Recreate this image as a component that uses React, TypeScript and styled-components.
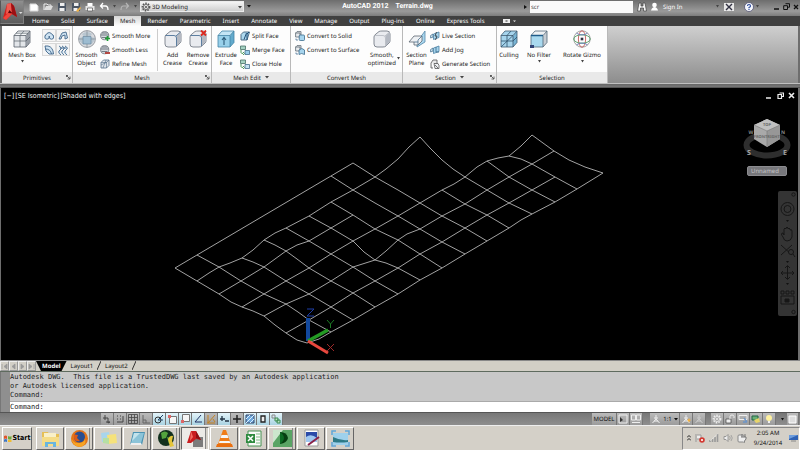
import React, { ReactNode } from "react";
import styled, { createGlobalStyle, css } from "styled-components";

const GlobalStyle = createGlobalStyle`
  *, *::before, *::after { box-sizing: border-box; }
  html, body { margin: 0; padding: 0; }
  body { background: #000; }
  button, input, select { font: inherit; color: inherit; margin: 0; padding: 0; border: 0; background: none; border-radius: 0; text-rendering: inherit; }
  svg { display: block; flex: none; }
`;

const ui = `"Noto Sans", "DejaVu Sans Condensed", sans-serif`;

/* ---------- shell ---------- */

const Shell = styled.div`
  display: flex;
  flex-direction: column;
  min-height: 100vh;
  font: 6px/8px ${ui};
  text-rendering: geometricPrecision;
  color: #222;
  background: #6e6e6e;
`;

const Row = styled.div`
  display: flex;
  align-items: center;
`;

const IconButton = styled.button<{ $w?: number }>`
  display: flex;
  align-items: center;
  justify-content: center;
  width: ${(p) => p.$w ?? 14}px;
  flex: none;
`;

/* ---------- header ---------- */

const Header = styled.header`
  display: grid;
  grid-template-columns: 24px 1fr;
  background: #404040;
`;

const AppButton = styled.button`
  grid-row: span 2;
  display: flex;
  align-items: center;
  align-self: start;
  height: 24px;
  padding-left: 2px;
  background: linear-gradient(#8f8f8f, #5b5b5b);
  border: 1px solid #7f7f7f;
  border-left-color: #555;
`;

const TitleBar = styled.div`
  display: flex;
  align-items: center;
  height: 16px;
  padding-bottom: 3px;
  background: linear-gradient(#6d6d6d, #9a9a9a 70%, #7c7c7c);
`;

const Workspace = styled.div`
  display: grid;
  align-items: center;
  width: 104px;
  height: 11px;
  margin-left: 1px;
  background: linear-gradient(#f4f4f4, #cfcfcf);
  border: 1px solid #ececec;
  & > * { grid-area: 1 / 1; }
  & > svg:last-child { justify-self: end; margin-right: 1px; }
  select {
    appearance: none;
    width: 100%;
    padding-left: 11px;
    color: #222;
    outline: none;
  }
`;

const Title = styled.h1`
  flex: 1;
  margin: 0;
  color: #fff;
  font: bold 7px/9px Roboto, sans-serif;
  text-align: center;
  white-space: pre;
`;

const Search = styled.input`
  width: 103px;
  height: 12px;
  padding-left: 1px;
  background: #fafafa;
  color: #444;
`;

const SignIn = styled.button`
  display: flex;
  align-items: center;
  gap: 4px;
  width: 66px;
  color: #fff;
`;

const TabBar = styled.nav`
  display: flex;
  height: 10px;
  padding-left: 2px;
`;

const Tab = styled.button<{ $active?: boolean }>`
  padding: 0 6px;
  color: #fff;
  line-height: 10px;
  white-space: nowrap;
  ${(p) =>
    p.$active &&
    css`
      color: #222;
      background: linear-gradient(#d6d6d6, #fdfdfd);
    `}
`;

/* ---------- ribbon ---------- */

const Ribbon = styled.section`
  display: flex;
  height: 57px;
  margin: 0 2px;
  background: linear-gradient(#cfcfcf, #8d8d8d);
`;

const Panel = styled.section<{ $w: number }>`
  display: flex;
  flex-direction: column;
  flex: 0 0 ${(p) => p.$w}px;
  background: #fdfdfd;
  border-right: 1px solid #b9b9b9;
`;

const PanelBody = styled.div<{ $pad?: number }>`
  display: flex;
  flex: 1;
  align-items: flex-start;
  padding: 3px 0 0 ${(p) => p.$pad ?? 0}px;
`;

const PanelFoot = styled.footer`
  display: grid;
  grid-template-columns: 8px 1fr 8px;
  align-items: center;
  justify-items: center;
  height: 11px;
  line-height: 10px;
  background: #e9e9e9;
  color: #222;
  span { display: flex; align-items: center; gap: 4px; grid-column: 2; }
`;

const Large = styled.button<{ $w: number }>`
  display: flex;
  flex-direction: column;
  align-items: center;
  flex: none;
  width: ${(p) => p.$w}px;
  padding-top: 1px;
  color: #222;
  line-height: 8px;
  white-space: pre;
  span { padding: 3px 0 1px; }
`;

const SmallList = styled.div`
  display: flex;
  flex-direction: column;
  flex: none;
`;

const Small = styled.button`
  display: flex;
  align-items: center;
  gap: 2px;
  height: 14px;
  color: #222;
  white-space: nowrap;
`;

const Divider = styled.div`
  width: 1px;
  height: 42px;
  margin: 0 2px 0 auto;
  background: #ccc;
`;

const PrimitiveGrid = styled.div`
  display: grid;
  grid-template-columns: 14px 14px;
  grid-auto-rows: 13px;
  gap: 1px 0;
  button { display: grid; place-items: center; border: 1px solid #d8d8d8; background: #f5f5f5; }
`;

const OptionArrow = styled.button`
  align-self: center;
  margin-top: 20px;
`;

const RibbonEdge = styled.div`
  height: 5px;
  background: linear-gradient(#c0c0c0 0 20%, #666 20%, #787878 80%, #333);
`;

/* ---------- viewport ---------- */

const Viewport = styled.main`
  display: grid;
  grid-template: 1fr / minmax(0, 1fr);
  height: 272px;
  margin: 0 2px 0 1px;
  background: #000;
  & > * { grid-area: 1 / 1; }
`;

const ViewLabels = styled.div`
  display: flex;
  gap: 1px;
  align-self: start;
  padding: 4px 0 0 3px;
  color: #f0f0f0;
  font: 7px/8px "DejaVu Sans Condensed", sans-serif;
  button { white-space: nowrap; }
`;

const ViewTools = styled.div`
  display: flex;
  flex-direction: column;
  align-items: flex-end;
  justify-self: end;
  align-self: start;
  padding: 4px 1px 0 0;
`;

const ViewCube = styled.div`
  display: flex;
  flex-direction: column;
  align-items: center;
  gap: 6px;
  margin: 19px 5px 0 0;
`;

const UcsName = styled.button`
  width: 40px;
  height: 10px;
  padding-left: 3px;
  text-align: left;
  border: 1px solid #8b8b8f;
  border-radius: 2px;
  background: #77777b;
  color: #c4c4c8;
  line-height: 8px;
`;

const NavBar = styled.nav`
  margin-top: 15px;
  width: 19px;
  height: 125px;
  border-radius: 2px;
  background: #343434;
`;

const Drawing = styled.svg`
  width: 100%;
  height: 272px;
`;

/* ---------- bottom ---------- */

const LayoutBar = styled.nav`
  display: flex;
  height: 12px;
  align-items: stretch;
  border-top: 1px solid #888;
  border-bottom: 1px solid #5f6b5f;
  background: #d2cfc6;
  color: #111;
`;

const LayoutTab = styled.button<{ $active?: boolean }>`
  padding: 0 4px;
  line-height: 9px;
  ${(p) =>
    p.$active &&
    css`
      padding: 0 6px;
      background: #000;
      color: #fff;
      font-weight: bold;
      clip-path: polygon(0 0, 100% 0, calc(100% - 5px) 100%, 5px 100%);
    `}
`;

const Arrows = styled.div`
  display: flex;
  button { width: 9px; display: grid; place-items: center; border: 1px solid; border-color: #eee #999 #999 #eee; }
`;

const Command = styled.section`
  display: grid;
  grid-template-columns: 9px 1fr;
  height: 40px;
  border-left: 1px solid #777;
  background: #8f8f8f;
  color: #222;
  font: 7px/9px "DejaVu Sans Mono", monospace;
`;

const History = styled.pre`
  margin: 0;
  height: 30px;
  padding-top: 1px;
  border-bottom: 1px solid #aaa;
  background: #c8c8c8;
  font: inherit;
`;

const CommandLine = styled.label`
  display: flex;
  align-items: center;
  height: 10px;
  background: #fff;
  input { flex: 1; outline: none; }
`;

const StatusBar = styled.div`
  display: flex;
  align-items: center;
  justify-content: space-between;
  height: 13px;
  padding: 0 1px 0 101px;
  background: linear-gradient(#777, #8e8e8e);
  border-top: 1px solid #555;
`;

const StatusButton = styled.button<{ $on?: boolean; $w?: number }>`
  display: grid;
  grid-auto-flow: column;
  place-items: center;
  width: ${(p) => p.$w ?? 13}px;
  height: 12px;
  color: #111;
  border-right: 1px solid #777;
  background: ${(p) => (p.$on ? "linear-gradient(#e4f4fa, #a9d3e2)" : "linear-gradient(#bbb, #9b9b9b)")};
`;

const Spacer = styled.div<{ $w: number }>`
  width: ${(p) => p.$w}px;
`;

const Taskbar = styled.footer`
  display: flex;
  align-items: center;
  gap: 1px;
  flex: 1;
  min-height: 25px;
  padding-left: 2px;
  border-top: 1px solid #eee;
  background: #d4d0c8;
`;

const TaskButton = styled.button<{ $active?: boolean; $stack?: boolean; $w?: number }>`
  display: flex;
  align-items: center;
  justify-content: center;
  width: ${(p) => p.$w ?? 28}px;
  height: 23px;
  border: 1px solid;
  border-color: ${(p) => (p.$active ? "#666 #fff #fff #666" : "#fff #666 #666 #fff")};
  background: ${(p) => (p.$active ? "#eceae6" : "#d4d0c8")};
  ${(p) => p.$stack && css`box-shadow: inset -2px 0 #d4d0c8, inset -3px 0 #888;`}
  font: bold 7px/9px "DejaVu Sans Condensed", sans-serif;
  color: #000;
  gap: 1px;
`;

const Tray = styled.div`
  display: flex;
  align-items: center;
  gap: 4px;
  height: 23px;
  margin-left: auto;
  padding: 0 1px 0 4px;
  border: 1px solid;
  border-color: #888 #fff #fff #888;
  color: #111;
`;

const Clock = styled.time`
  width: 34px;
  text-align: center;
  line-height: 10px;
  white-space: nowrap;
`;

/* ---------- icons ---------- */

const Svg = ({ w, h = w, children }: { w: number; h?: number; children: ReactNode }) => (
  <svg width={w} height={h} viewBox={`0 0 ${w} ${h}`} fill="none" aria-hidden="true">
    {children}
  </svg>
);

const Caret = ({ c = "#444", w = 4 }: { c?: string; w?: number }) => (
  <Svg w={w} h={3}><path d={`M0 0h${w}L${w / 2} 2.5z`} fill={c} /></Svg>
);

const Launcher = () => (
  <Svg w={5}><path d="M0 .5h2M.5 0v2M1 1l3 3M4 1.5V4H1.5" stroke="#555" strokeWidth=".9" /></Svg>
);

type CubeProps = { top?: string; left?: string; right?: string; line?: string; children?: ReactNode };

const Cube = ({ top = "#f4f6f8", left = "#e2e5e9", right = "#b8bdc5", line = "#59616b", children }: CubeProps) => (
  <Svg w={18}>
    <path d="M1 5.5 5 1h12l-4 4.5z" fill={top} />
    <path d="M1 5.5h12V17H1z" fill={left} />
    <path d="M13 5.5 17 1v11.5L13 17z" fill={right} />
    <path d="M1 5.5 5 1h12v11.5L13 17H1zM1 5.5h12V17M13 5.5 17 1" stroke={line} strokeWidth=".8" />
    {children}
  </Svg>
);

const RoundCube = ({ cut, edge = "#4d7397" }: { cut?: boolean; edge?: string }) => (
  <Svg w={18}>
    <path d="M1 7Q1 5 3 4L6 1.500Q7 1 9 1h5q3 0 3 3v7q0 1-1 2l-3 3q-1 1-3 1H4q-3 0-3-3z" fill="#e9ebef" stroke="#777e88" strokeWidth=".9" />
    <path d="M12.500 6 16.500 2q.5 1 .5 2v7l-4 5z" fill="#b4b9c2" />
    <path d="M1.500 5.500H10q2.500 0 2.500 2.500v8M12 6l4.500-4" stroke={edge} strokeWidth=".9" />
    {cut && <path d="M12 .5l5 5M17 .5l-5 5" stroke="#dd2a20" strokeWidth="1.800" />}
  </Svg>
);

const SmoothObject = () => (
  <Svg w={18}>
    <circle cx="9" cy="9" r="8.400" fill="#d8dade" stroke="#848991" strokeWidth=".8" />
    <path d="M4 4q5-4 10 0l-2 2.500H6zM1 8l4-1v7q-4-2-4-6zM13 7l4 1q-1 5-4 6z" fill="#b9c6d0" />
    <path d="M5 6.500h8V14H5z" fill="#9dbcd1" stroke="#6b8aa1" strokeWidth=".7" />
    <path d="M9 .8v5.700M1 9h4M13 9h4M9 14v3.500" stroke="#7f8a94" strokeWidth=".7" />
  </Svg>
);

const SmoothMini = ({ mark }: { mark: "plus" | "minus" | "refine" }) => (
  <Svg w={10}>
    {mark === "refine" ? (
      <>
        <path d="M1 3.500 3.500 1H9v5.500L6.500 9H1z" fill="#dfe4ea" stroke="#56708a" strokeWidth=".8" />
        <path d="M1 3.500h5.500V9M6.500 3.500 9 1M3 9l3-8M1 6l6-3" stroke="#56708a" strokeWidth=".6" />
      </>
    ) : (
      <>
        <circle cx="4.700" cy="4.700" r="4.100" fill="#d5d9de" stroke="#70757c" strokeWidth=".8" />
        <path d="M.7 4h8M2 2h5.500M1.500 6.500h6" stroke="#5c6670" strokeWidth=".8" />
        {mark === "plus"
          ? <path d="M7.500 5v5M5 7.500h5" stroke="#219c36" strokeWidth="1.700" />
          : <path d="M5 8h5" stroke="#b33a34" strokeWidth="1.800" />}
      </>
    )}
  </Svg>
);

const EditMini = ({ kind }: { kind: "split" | "merge" | "hole" }) => (
  <Svg w={10}>
    {kind === "split" ? (
      <>
        <path d="M1 3.500 3.500 1H9.500L7 9H1z" fill="#aed9ef" stroke="#41617b" strokeWidth=".9" />
        <path d="M4 8.500 6.500 2M7 9V3L9 1" stroke="#1f4d77" strokeWidth="1" />
      </>
    ) : (
      <>
        <path d="M.5 1h5v3.500h-5z" fill="#a5d2c2" stroke="#477066" strokeWidth=".8" />
        <path d="M1 5v2.500q0 1 2 1M3 7l1.500 1.500L3 10" stroke="#3c8e4c" strokeWidth=".9" />
        <path d="M5 5.500h4.500V9.500H5z" fill={kind === "merge" ? "#98cce8" : "#c5e2f2"} stroke="#446e8b" strokeWidth=".8" />
      </>
    )}
  </Svg>
);

const ConvertMini = ({ round }: { round?: boolean }) => (
  <Svg w={10}>
    <path d="M.6 2 2 .6h4V6H.6zM.6 2H5v4" fill="#e8ebee" stroke="#606a74" strokeWidth=".8" />
    <path d="M1 7.500v1.500h2" stroke="#4d7397" strokeWidth=".8" />
    {round ? <path d="M4 5q3-3 5.500 0v4.500q-3-2-5.500 0z" fill="#a7d5ee" stroke="#3b6b8c" strokeWidth=".8" />
      : <rect x="4.200" y="4" width="5.300" height="5.500" rx="1" fill="#a7d5ee" stroke="#3b6b8c" strokeWidth=".8" />}
  </Svg>
);

const SectionPlane = () => (
  <Svg w={18}>
    <path d="M9 12 17 1v11l-8 5z" fill="#a9d6ee" stroke="#5688a8" strokeWidth=".8" />
    <path d="M1 12 6 6h8v5l-4 4H6v-3z" fill="#eef1f4" stroke="#5c646e" strokeWidth=".8" />
    <path d="M10 15v-5l4-4M6 12h4" stroke="#4a6f8a" strokeWidth=".8" />
  </Svg>
);

const SectionMini = ({ kind }: { kind: "live" | "jog" | "gen" }) => (
  <Svg w={10}>
    {kind === "gen" ? (
      <>
        <path d="M1 4 3 1h4v4M1 4v5h2" fill="#e8e8e8" stroke="#555" strokeWidth=".8" />
        <path d="M4 4.500h4l1 2v3H5zM5 6l3 3" fill="#eef1f3" stroke="#555" strokeWidth=".8" />
      </>
    ) : (
      <>
        <path d="M.6 7V4.500L3 3v3z" fill="#d3e8f4" stroke="#4b7391" strokeWidth=".8" />
        <path d="M3.500 8.500V3l5.500-2v5.500z" fill="#a7d4ec" stroke="#4c81a4" strokeWidth=".8" />
        {kind === "live" ? <path d="M6.500 1 5 5h2L5.500 9" stroke="#39424b" strokeWidth=".9" /> : <path d="M6 2v5h3" stroke="#39698c" strokeWidth=".8" />}
      </>
    )}
  </Svg>
);

const Gizmo = () => (
  <Svg w={18}>
    <circle cx="9" cy="9" r="8.200" stroke="#8c8c8c" strokeWidth=".8" />
    <ellipse cx="9" cy="9" rx="3.600" ry="8.200" stroke="#c35a5a" strokeWidth=".9" />
    <ellipse cx="9" cy="9" rx="8.200" ry="4.200" stroke="#4f9b63" strokeWidth=".9" />
    <path d="M3.500 3.200q5.500 3.500 11 0M3.500 14.800q5.500-3.500 11 0" stroke="#5a70b8" strokeWidth=".8" />
    <rect x="7.700" y="7.700" width="2.600" height="2.600" fill="#334" />
  </Svg>
);

const primitivePaths = [
  <><circle cx="3" cy="6" r="2.200" /><circle cx="7.500" cy="6" r="2.200" /><path d="M1 5q4-7 8.500 0" /></>,
  <path d="M1 8 4 2l4-1 1.500 6-2.500 1V4L4 5 3 8z" />,
  <path d="M1 1h3q5 1 5.500 8H5Q1 7 1 1zM1.500 4q5 0 6 5" />,
  <path d="M1 1q4 2 1 4t1 5M4 1q4 2 1 4t1 5M7 1q4 2 1 4t1 5M2 3h6" />,
];

const PrimitiveIcon = ({ i }: { i: number }) => (
  <Svg w={10}><g fill="#cfe3f2" stroke="#3f658a" strokeWidth=".9">{primitivePaths[i]}</g></Svg>
);

const AutoLogo = () => (
  <Svg w={20} h={20}>
    <path d="M0 16 4 2l4-1 3 3 3 11-5-3-6 6z" fill="#d0201e" />
    <path d="m4 2 4-1 1 9-6 2z" fill="#ef5a50" />
    <path d="m8 1 3 3 3 11-5-3z" fill="#9d1013" />
    <path d="m0 16 3 2 6-6-4-1z" fill="#f0453c" />
    <path d="m5 11 1.500-3L9 11z" fill="#5a0608" />
    <path d="M16 10h3.500l-1.700 2z" fill="#ddd" />
  </Svg>
);

const quickIcons: [string, ReactNode][] = [
  ["New", <path d="M1 2h6l2 2v5H1z" fill="#fff" stroke="#d8d8d8" />],
  ["Open", <><path d="M1 8V2h3l1 1h3v2" stroke="#eee" /><path d="m1 8 2-4h7L8 8z" fill="#ddd" /></>],
  ["Save", <><path d="M1 1h8v8H1z" fill="#4b5563" /><path d="M3 1h4.500v3H3zM2.500 6h5v3h-5z" fill="#eee" /></>],
  ["Save As", <><path d="M1 1h8v8H1z" fill="#4b5563" /><path d="M3 1h4.500v3H3zM2.500 6h4v3h-4z" fill="#eee" /><path d="m5 9 4-4 1 1-3 4z" fill="#f1b346" /></>],
  ["Plot", <><path d="M2.500 1h5v3h-5z" fill="#fff" /><path d="M.5 4h9v4h-9z" fill="#e5e5e5" /><path d="M2.500 6h5v3h-5z" fill="#fff" stroke="#555" strokeWidth=".7" /></>],
  ["Undo", <path d="M4 1 1.500 4 4 6.500M2 4h4.500Q9 4 9 8" stroke="#fff" strokeWidth="1.300" />],
  ["Redo", <path d="M6 1 8.500 4 6 6.500M8 4H3.500Q1 4 1 8" stroke="#b5b5b5" strokeWidth="1.200" />],
];

const Gear = ({ c = "#555" }: { c?: string }) => (
  <Svg w={10}>
    <circle cx="5" cy="5" r="3.700" stroke={c} strokeWidth="1.400" strokeDasharray="1.600 1.100" />
    <circle cx="5" cy="5" r="2.600" stroke={c} strokeWidth=".8" /><circle cx="5" cy="5" r="1" fill={c} />
  </Svg>
);

/* ---------- terrain ---------- */

type P = [number, number];
const rows: P[][] = [
  [[175, 268], [197, 255], [353, 163]],
  [[197, 281], [209, 273], [219, 267], [230, 263], [242, 258], [253, 250], [264, 240], [275, 233], [286, 228], [309, 216], [331, 202], [353, 190], [375, 177], [386, 169], [398, 159], [409, 147], [420, 137]],
  [[219, 294], [241, 281], [264, 267], [286, 251], [297, 245], [309, 241], [331, 228], [353, 215]],
  [[242, 307], [264, 294], [286, 281], [309, 268], [331, 254], [353, 241], [375, 229], [398, 216], [420, 203], [442, 190], [454, 184], [465, 177], [477, 167], [487, 161], [498, 158], [509, 156], [521, 146], [532, 135]],
  [[264, 316], [286, 304], [309, 294], [331, 281], [353, 267], [375, 260], [386, 251], [398, 240], [407, 234], [420, 229], [442, 216], [465, 204], [487, 190], [509, 177], [532, 164], [554, 151]],
  [[286, 333], [309, 320], [331, 307], [353, 293], [375, 281], [398, 268], [420, 254], [442, 242], [465, 228], [487, 215], [509, 203], [532, 190], [555, 177]],
  [[307, 343], [319, 339], [331, 332], [353, 320], [375, 307], [398, 294], [420, 280], [442, 268], [465, 254], [487, 241], [509, 228], [521, 220], [532, 214], [555, 202], [577, 189], [603, 173]],
];
const columns: P[][] = [
  [[175, 268], [197, 281], [219, 294], [231, 302], [242, 307], [253, 311], [264, 316], [275, 325], [286, 333], [297, 340], [307, 343]],
  [[197, 255], [219, 267], [241, 281], [264, 294], [286, 304], [298, 312], [309, 320], [331, 332]],
  [[242, 258], [253, 262], [264, 267], [286, 281], [309, 294], [331, 307], [353, 320]],
  [[264, 240], [275, 245], [286, 251], [297, 259], [309, 268], [331, 281], [353, 293], [375, 307]],
  [[286, 228], [309, 241], [331, 254], [353, 267], [375, 281], [398, 294]],
  [[309, 216], [331, 228], [353, 241], [364, 252], [375, 260], [386, 263], [398, 268], [409, 274], [420, 280]],
  [[331, 202], [353, 215], [375, 229], [398, 240], [420, 254], [442, 268]],
  [[331, 176], [353, 190], [375, 203], [398, 216], [420, 229], [442, 242], [465, 254]],
  [[353, 163], [375, 177], [398, 190], [420, 203], [442, 216], [465, 228], [487, 241]],
  [[442, 190], [465, 204], [487, 215], [509, 228]],
  [[420, 137], [430, 148], [442, 160], [453, 169], [465, 177], [487, 190], [509, 203], [532, 214]],
  [[487, 161], [509, 177], [532, 190], [555, 202]],
  [[509, 156], [521, 159], [532, 164], [555, 177], [577, 189]],
  [[532, 135], [554, 151], [569, 160], [585, 167], [603, 173]],
];

const Terrain = () => (
  <Drawing viewBox="1 88 797 272" preserveAspectRatio="xMinYMin meet" fill="none" role="img" aria-label="Terrain mesh">
    <g stroke="#b4b4b4" strokeWidth=".9">
      {[...rows, ...columns].map((line, i) => (
        <polyline key={i} points={line.map((p) => p.join(",")).join(" ")} />
      ))}
    </g>
    <path d="M308 341V318" stroke="#12489c" strokeWidth="4" />
    <path d="m308 341 20-11" stroke="#249a24" strokeWidth="3.500" />
    <path d="m308 341 20 12" stroke="#e8483e" strokeWidth="3" />
    <path d="M307 309h7l-7 7h7" stroke="#1f3fa8" />
    <path d="m327 320 3.500 4 3.500-4M330.500 324v4" stroke="#1c7a25" />
    <path d="m327 344 7 7M334 344l-7 7" stroke="#9c2a2a" />
  </Drawing>
);

const CubeDial = () => (
  <svg width="50" height="42" viewBox="0 0 50 42" fill="none">
    <ellipse cx="25" cy="27" rx="20.500" ry="10.500" stroke="#2e2e2e" strokeWidth="6" />
    <path d="m12 7 13-6 13 6v14l-13 8-13-8z" fill="#a9a9a9" />
    <path d="m12 7 13-6 13 6-13 6z" fill="#c0c0c0" />
    <path d="M25 13v16l13-8V7z" fill="#979797" />
    <path d="m12 7 13 6 13-6M25 13v16" stroke="#777" strokeWidth=".6" />
    <g fill="#666" fontFamily={ui} fontSize="4" fontWeight="bold" textAnchor="middle">
      <text x="25" y="8">TOP</text>
      <text x="18.500" y="20">FRONT</text>
      <text x="31.500" y="20">RIGHT</text>
    </g>
    <g fill="#a4a4a4" fontFamily={ui} fontSize="7" fontWeight="bold" textAnchor="middle">
      <text x="7" y="37">S</text><text x="43" y="37">E</text>
    </g>
    <g fill="#888" fontFamily={ui} fontSize="5" fontWeight="bold" textAnchor="middle">
      <text x="9" y="16">W</text><text x="41" y="16">N</text>
    </g>
  </svg>
);

const NavIcons = () => (
  <Svg w={19} h={125}>
    <g stroke="#161616" strokeWidth="1">
      <circle cx="15.500" cy="3.500" r="1.700" />
      <circle cx="9.500" cy="18" r="6.500" /><circle cx="9.500" cy="18" r="3.500" />
      <path d="M5 46q-3-4 0-4l1 2v-6q1-2 2 0v-1q1-2 2 0v1q1-2 2 0v1q2-1 2 1v6q-1 4-5 4-3 0-4-4z" />
      <path d="m3 54 11 10M14 54 3 64" /><circle cx="13" cy="61" r="2.500" fill="#343434" /><path d="m15 63 2 3" />
      <path d="M9.500 75v13M3 82h13M7 77l2.500-2.500L12 77M7 86l2.500 2.500L12 86M5 80l-2 2 2 2M14 80l2 2-2 2" />
      <path d="M3 100h3v3H3zM8 100h3v3H8zM13 100h3v3h-3zM3 105h13v8H3z" /><path d="M7 108h4v3H7z" fill="#161616" />
      <circle cx="15.500" cy="121" r="1.700" />
    </g>
    <g fill="#111"><path d="M8 29h3l-1.500 2zM8 70h3l-1.500 2zM8 92h3l-1.500 2z" /></g>
  </Svg>
);

/* ---------- status and taskbar drawings ---------- */

const statusIcons: [string, boolean, ReactNode][] = [
  ["Infer constraints", false, <path d="M3 1v5M1 4h5M6 4v5l2-1M4 8h4" stroke="#444" />],
  ["Snap", false, <path d="M2 2h1M5 2h1M2 5h1M5 5h1M2 8h6V2" stroke="#444" />],
  ["Grid", false, <path d="M.5.5h9v9h-9zM3.500.5v9M6.500.5v9M.5 3.500h9M.5 6.500h9" stroke="#444" strokeWidth=".8" />],
  ["Ortho", false, <path d="M2 1v8h7M2 6h3v3" stroke="#666" />],
  ["Polar", true, <><circle cx="4" cy="6" r="3" stroke="#333" /><path d="m4 6 5-5M4 6h5" stroke="#246" /></>],
  ["Object snap", true, <><path d="M2.500 2.500h7v7h-7z" stroke="#777" fill="#f6f6f6" /><path d="M1 1h3v3H1z" fill="#d66" /></>],
  ["3D object snap", true, <><path d="M2.500.5h7v7h-7z" stroke="#777" fill="#f6f6f6" /><path d="M1 6h3v3H1z" fill="#d66" /></>],
  ["Tracking", true, <path d="M8 1 2 8h7" stroke="#236" />],
  ["Dynamic UCS", false, <path d="M2 9V1M1 9h8M2 9l7-8M7 5l2 3" stroke="#c58422" />],
  ["Dynamic input", true, <path d="M3 2v5M1 5h5M6 7h4" stroke="#234" strokeWidth="1.300" />],
  ["Lineweight", false, <path d="M5 1v8M1 5h8" stroke="#222" strokeWidth="1.500" />],
  ["Transparency", true, <><path d="M1 1h8v8H1z" fill="#6fa8dc" stroke="#346" /><path d="m1 5 4-4M1 9l8-8M5 9l4-4" stroke="#dcefff" /></>],
  ["Quick properties", true, <path d="M3 2h4v6H3z" stroke="#222" strokeWidth="1.300" fill="#eee" />],
  ["Selection cycling", true, <><path d="M1 1h3v3H1z" stroke="#888" /><path d="M4 4h3v3H4zM6 6h3v3H6z" fill="#bde3c3" stroke="#3a8b52" /></>],
];

const Compass = ({ star, c = "#eee" }: { star?: boolean; c?: string }) => (
  <Svg w={10}>
    <path d="M5 1v4L1.500 9M5 5l3.500 4M3 4h4M3 7h4" stroke={c} />
    {star && <path d="m8 4 .7 1.500L10 6 8.700 7 8 9 7.300 7 6 6l1.300-.5z" fill="#f6b13c" />}
  </Svg>
);

const taskItems: [string, boolean, boolean, ReactNode][] = [
  ["Explorer", false, false, <><path d="M1 3h6l1 2h10v12H1z" fill="#e6bf55" /><path d="M3 4h12v7H3z" fill="#f9f0c8" /><path d="M1 8h17v9H1z" fill="#f5dc86" /><path d="M4 18v-5h11v5h-3v-3H7v3z" fill="#69b5de" /></>],
  ["Firefox", false, true, <><circle cx="9.500" cy="9.500" r="8.500" fill="#e2741a" /><circle cx="9.500" cy="8" r="5.500" fill="#294d91" /><path d="M1 7q1 8 9 7 5-1 5-5 2 8-5 9-8 0-9-11z" fill="#f6a323" /><path d="M4 5q2 1 4 1l-1 3 3 3q-5 1-6-3z" fill="#db5a17" /></>],
  ["Sticky Notes", false, false, <><path d="m2 4 8-1 1 9-8 1z" fill="#a8d5ec" /><path d="m8 6 9-1 1 9-9 1z" fill="#f6e27a" /><path d="m4 9 6 0 0 6-6-1z" fill="#b7dfa3" /></>],
  ["Notepad", false, true, <><path d="M5 3h12l-3 13H2z" fill="#4b93b3" /><path d="M6 4h10l-3 10H3z" fill="#8cc4d8" /><path d="M6 4h6L4 12z" fill="#c3e3ec" /><path d="M3 14h10l1 2H2z" fill="#eee" /></>],
  ["Download manager", false, true, <><circle cx="9" cy="9" r="8" fill="#12301d" /><path d="M4 4q4-3 7 0l-2 5-4 1zM10 8l5 1-3 6z" fill="#53a43e" /><path d="M11 10q2-4 5-3l-1 5 2 5-4 1z" fill="#e4c53a" /></>],
  ["AutoCAD", true, true, <><path d="M7 8h10v10H7z" fill="#7c7c7c" /><path d="m1 14 4-12h5l5 9-5-1-5 4z" fill="#c91c1f" /><path d="m5 2 2 6-3 4z" fill="#f26a60" /><path d="m10 2 5 9-5-2z" fill="#8e0f13" /></>],
  ["VLC", false, false, <><path d="m8 1h3l5 14H3z" fill="#ef7d18" /><path d="M6.500 6h6l1 3h-8zM4.500 12h10l1 2H4z" fill="#f6f6f6" /><path d="M2 15h15l1 3H1z" fill="#e96f10" /></>],
  ["Excel", false, false, <><path d="M4 2h13v15H4z" fill="#fafafa" stroke="#469353" /><path d="M12 5h4M12 8h4M12 11h4M12 14h4" stroke="#7fbf85" /><path d="M2 5h9v9H2z" fill="#2f8b40" /><path d="m4 7 5 5M9 7l-5 5" stroke="#fff" strokeWidth="1.500" /></>],
  ["Media", false, true, <><path d="M0 1h19v17H0z" fill="#5aa465" /><path d="M0 1h10L0 14z" fill="#cce7cd" /><path d="M7 3q7 0 8 6-1 5-8 6z" fill="#063f12" /><path d="M7 3q4 3 4 6t-4 6z" fill="#0c6a24" /></>],
  ["Image editor", false, false, <><path d="M3 1h13v16H3z" fill="#fff" stroke="#999" /><path d="M4 3h11v8H4z" fill="#2b4aa8" /><path d="M4 8q5-4 11 1v4H4z" fill="#9fc7f0" /><path d="m6 16 11-8" stroke="#8a2348" strokeWidth="2" /></>],
  ["Photo viewer", false, false, <><path d="M2 4h15v12H2z" fill="#9ed1ec" /><path d="M2 8q8 4 15 3v2q-8 1-15 0z" fill="#2d7a87" /><path d="M1 6V2h4M14 2h4v4M1 13v4h4M14 17h4v-4" stroke="#5ea5d8" strokeWidth="1.500" /></>],
];

const tabs = ["Home", "Solid", "Surface", "Mesh", "Render", "Parametric", "Insert", "Annotate", "View", "Manage", "Output", "Plug-ins", "Online", "Express Tools"];

const layoutArrows: [string, string][] = [
  ["First layout", "M1 1v5M6 1 3 3.500 6 6z"],
  ["Previous layout", "M5 1 2 3.500 5 6z"],
  ["Next layout", "M2 1l3 2.500L2 6z"],
  ["Last layout", "M6 1v5M1 1l3 2.500L1 6z"],
];

const Foot = ({ label, menu, launch }: { label: string; menu?: boolean; launch?: boolean }) => (
  <PanelFoot>
    <span>{label}{menu && <Caret />}</span>
    {launch && <Launcher />}
  </PanelFoot>
);

const Big = ({ w, label, icon, menu }: { w: number; label: string; icon: ReactNode; menu?: boolean }) => (
  <Large $w={w}>{icon}<span>{label}</span>{menu && <Caret w={3} />}</Large>
);

export default function App() {
  return (
    <Shell>
      <GlobalStyle />
      <Header>
        <AppButton aria-label="Application menu"><AutoLogo /></AppButton>
        <TitleBar>
          <Spacer $w={3} />
          {quickIcons.map(([name, art], i) => (
            <React.Fragment key={name}>
              <IconButton aria-label={name}><Svg w={10}>{art}</Svg></IconButton>
              {i > 4 && <IconButton $w={7} aria-label={`${name} list`}><Caret c="#444" w={3} /></IconButton>}
            </React.Fragment>
          ))}
          <Workspace>
            <select aria-label="Workspace" defaultValue="3D Modeling"><option>3D Modeling</option></select>
            <Gear />
            <Caret />
          </Workspace>
          <IconButton $w={10} aria-label="Customize"><Caret c="#111" /></IconButton>
          <Title>{"AutoCAD 2012    Terrain.dwg"}</Title>
          <IconButton $w={9} aria-label="Expand search"><Svg w={4}><path d="M0 0v4l3-2z" fill="#111" /></Svg></IconButton>
          <Search aria-label="Search" defaultValue="scr" />
          <IconButton $w={17} aria-label="Find">
            <Svg w={10}><path d="M2 1h2v3h2V1h2l1.500 8h-3V6h-3v3h-3z" fill="#f2f2f2" stroke="#444" strokeWidth=".7" /></Svg>
          </IconButton>
          <SignIn>
            <Svg w={9}><circle cx="4.500" cy="3" r="2.300" fill="#fff" /><path d="M1 8.500Q2 5 4.500 5T8 8.500z" fill="#fff" /></Svg>
            Sign In
          </SignIn>
          <Caret w={3} />
          <Spacer $w={3} />
          <IconButton aria-label="Exchange"><Svg w={10}><path d="M0 1h10v8H0z" fill="#e8e8e8" /><path d="m2 2 3 3 3-3M2 8l3-3 3 3" stroke="#334" strokeWidth="1.400" /></Svg></IconButton>
          <Spacer $w={6} />
          <IconButton aria-label="Help"><Svg w={10}><circle cx="5" cy="5" r="4.500" fill="#f4f6fc" stroke="#446" strokeWidth=".7" /><path d="M3.500 4Q3.500 2.500 5 2.500T6.500 4Q6.500 5 5 5.500v.7M5 7v1" stroke="#27479a" strokeWidth="1.100" /></Svg></IconButton>
          <Caret w={3} />
          <Spacer $w={12} />
          <IconButton $w={10} aria-label="Minimize"><Svg w={7}><path d="M1 6h5" stroke="#111" strokeWidth="1.500" /></Svg></IconButton>
          <IconButton $w={10} aria-label="Restore"><Svg w={7}><path d="M2.500.7h4v3.500h-2M.7 2.700h3.800v3.800H.7z" stroke="#111" /></Svg></IconButton>
          <IconButton $w={9} aria-label="Close"><Svg w={6}><path d="m1 1 4 4M5 1 1 5" stroke="#111" strokeWidth="1.300" /></Svg></IconButton>
        </TitleBar>
        <TabBar>
          {tabs.map((t) => <Tab key={t} $active={t === "Mesh"}>{t}</Tab>)}
          <Spacer $w={11} />
          <IconButton aria-label="Minimize ribbon"><Svg w={14} h={6}><path d="M1 1h7v4H1z" fill="#eee" /><path d="M3.500 3h2" stroke="#333" /><path d="M11 2.500h3L12.500 4z" fill="#eee" /></Svg></IconButton>
        </TabBar>
      </Header>

      <Ribbon>
        <Panel $w={71}>
          <PanelBody>
            <Big w={40} label="Mesh Box" menu icon={<Cube><path d="M7 5.500V17M1 11h12l4-4M3 3.200h12V14.500M7 5.500 11 1" stroke="#59616b" strokeWidth=".7" /></Cube>} />
            <PrimitiveGrid>
              {["Mesh Revolve", "Mesh Edge", "Mesh Ruled", "Mesh Tab"].map((n, i) => <button key={n} aria-label={n}><PrimitiveIcon i={i} /></button>)}
            </PrimitiveGrid>
          </PanelBody>
          <Foot label="Primitives" launch />
        </Panel>
        <Panel $w={139}>
          <PanelBody>
            <Big w={27} label={"Smooth\nObject"} icon={<SmoothObject />} />
            <SmallList>
              <Small><SmoothMini mark="plus" />Smooth More</Small>
              <Small><SmoothMini mark="minus" />Smooth Less</Small>
              <Small><SmoothMini mark="refine" />Refine Mesh</Small>
            </SmallList>
            <Divider />
            <Big w={25} label={"Add\nCrease"} icon={<RoundCube />} />
            <Big w={26} label={"Remove\nCrease"} icon={<RoundCube cut />} />
          </PanelBody>
          <Foot label="Mesh" launch />
        </Panel>
        <Panel $w={79}>
          <PanelBody>
            <Big w={28} label={"Extrude\nFace"} icon={<Cube top="#c4e5f5" left="#98d0ea" right="#62aacc" line="#4384a6"><path d="M7 15V8M5 10l2-2.500L9 10" stroke="#2a5a78" strokeWidth="1.100" /></Cube>} />
            <SmallList>
              <Small><EditMini kind="split" />Split Face</Small>
              <Small><EditMini kind="merge" />Merge Face</Small>
              <Small><EditMini kind="hole" />Close Hole</Small>
            </SmallList>
          </PanelBody>
          <Foot label="Mesh Edit" menu />
        </Panel>
        <Panel $w={112}>
          <PanelBody $pad={4}>
            <SmallList>
              <Small><ConvertMini />Convert to Solid</Small>
              <Small><ConvertMini round />Convert to Surface</Small>
            </SmallList>
            <Spacer $w={7} />
            <Row>
              <Big w={31} label={"Smooth,\noptimized"} icon={<RoundCube edge="#b9bdc4" />} />
              <OptionArrow aria-label="Smooth options"><Caret w={3} /></OptionArrow>
            </Row>
          </PanelBody>
          <Foot label="Convert Mesh" />
        </Panel>
        <Panel $w={94}>
          <PanelBody>
            <Big w={27} label={"Section\nPlane"} icon={<SectionPlane />} />
            <SmallList>
              <Small><SectionMini kind="live" />Live Section</Small>
              <Small><SectionMini kind="jog" />Add Jog</Small>
              <Small><SectionMini kind="gen" />Generate Section</Small>
            </SmallList>
          </PanelBody>
          <Foot label="Section" menu launch />
        </Panel>
        <Panel $w={111}>
          <PanelBody>
            <Big w={24} label="Culling" icon={<Cube top="#a6d4ec" left="#a6d4ec" right="#78b4d4" line="#3d596e"><path d="M7 5.500V17M1 11h12l4-4M7 5.500 11 1M1 17 13 5.500" stroke="#2e516b" strokeWidth=".8" /></Cube>} />
            <Big w={36} label="No Filter" menu icon={<Cube top="#eef1f3" left="#a9d9ef" right="#c7cdd3" line="#52687a"><path d="M1 5.500h12" stroke="#1f5c8a" strokeWidth="1.500" /><path d="M0 15h4v3H0z" fill="#347" /></Cube>} />
            <Big w={50} label="Rotate Gizmo" menu icon={<Gizmo />} />
          </PanelBody>
          <Foot label="Selection" />
        </Panel>
      </Ribbon>
      <RibbonEdge />

      <Viewport>
        <Terrain />
        <ViewLabels>
          <button>[−]</button><button>[SE Isometric]</button><button>[Shaded with edges]</button>
        </ViewLabels>
        <ViewTools>
          <Row>
            <IconButton $w={12} aria-label="Minimize view"><Svg w={7}><path d="M1 6h5" stroke="#eee" strokeWidth="1.500" /></Svg></IconButton>
            <IconButton $w={12} aria-label="Restore view"><Svg w={7}><path d="M2.500 1h4v3.500h-2M1 2.500h3.500v4H1z" stroke="#eee" strokeWidth="1.200" /></Svg></IconButton>
            <IconButton $w={11} aria-label="Close view"><Svg w={7}><path d="m1 1 5 5M6 1 1 6" stroke="#eee" strokeWidth="1.600" /></Svg></IconButton>
          </Row>
          <ViewCube>
            <CubeDial />
            <UcsName>Unnamed</UcsName>
          </ViewCube>
          <NavBar aria-label="Navigation"><NavIcons /></NavBar>
        </ViewTools>
      </Viewport>

      <LayoutBar>
        <Arrows>
          {layoutArrows.map(([name, d]) => (
            <button key={name} aria-label={name}><Svg w={7}><path d={d} fill="#999" stroke="#999" strokeWidth=".8" /></Svg></button>
          ))}
        </Arrows>
        <LayoutTab $active>Model</LayoutTab>
        <LayoutTab>Layout1</LayoutTab>
        <Svg w={4} h={9}><path d="M0 9 4 0" stroke="#333" /></Svg>
        <LayoutTab>Layout2</LayoutTab>
        <Svg w={4} h={9}><path d="M0 9 4 0" stroke="#333" /></Svg>
      </LayoutBar>

      <Command>
        <div />
        <div>
          <History>{"Autodesk DWG.  This file is a TrustedDWG last saved by an Autodesk application\nor Autodesk licensed application.\nCommand:"}</History>
          <CommandLine>Command:<input aria-label="Command line" /></CommandLine>
        </div>
      </Command>

      <StatusBar>
        <Row>
          {statusIcons.map(([name, on, art]) => (
            <StatusButton key={name} $on={on} aria-label={name}><Svg w={10}>{art}</Svg></StatusButton>
          ))}
        </Row>
        <Row>
          <StatusButton $w={25}>MODEL</StatusButton>
          <StatusButton aria-label="Quick view layouts"><Svg w={10}><path d="M1 1h8v8H1z" stroke="#eee" /><path d="m2 3 3 3-3 2z" fill="#333" /></Svg></StatusButton>
          <StatusButton aria-label="Quick view drawings"><Svg w={10}><path d="M.5 1h4v5h-4zM5.500 1h4v5h-4zM1 8.500h8" stroke="#eee" /></Svg></StatusButton>
          <Spacer $w={7} />
          <StatusButton $w={30}><Compass />1:1<Caret c="#111" /></StatusButton>
          <StatusButton aria-label="Annotation visibility"><Compass star /></StatusButton>
          <StatusButton aria-label="Auto scale"><Compass c="#ccc" /></StatusButton>
          <Spacer $w={5} />
          <StatusButton aria-label="Workspace switching"><Gear c="#eee" /></StatusButton>
          <StatusButton aria-label="Lock"><Svg w={10}><path d="M1 5h5v4H1z" fill="#eee" stroke="#444" strokeWidth=".7" /><path d="M5 5V2.500q0-1.500 2-1.500t2 1.500V4" stroke="#eee" /></Svg></StatusButton>
          <StatusButton aria-label="Hardware"><Svg w={10}><path d="M1 1.500h8v4H1z" stroke="#eee" /><path d="m6 4 3 4M5 8h4" stroke="#6c95c8" strokeWidth="1.300" /></Svg></StatusButton>
          <StatusButton aria-label="Isolate"><Svg w={10}><path d="M1 2h6v4H1z" fill="#69b077" stroke="#264" /><path d="m3 6 5-2 1 4-4 1z" fill="#e8d56a" /></Svg></StatusButton>
          <StatusButton aria-label="Light"><Svg w={10}><circle cx="5" cy="4" r="3" fill="#fff2a0" /><path d="M4 7h2v2H4z" fill="#eee" /></Svg></StatusButton>
          <Spacer $w={5} />
          <Caret w={3} c="#111" />
          <Spacer $w={3} />
          <StatusButton $w={12} aria-label="Clean screen"><Svg w={9}><path d="M1 1h7v7H1z" fill="#ddd" stroke="#fff" /></Svg></StatusButton>
        </Row>
      </StatusBar>

      <Taskbar>
        <TaskButton $w={30}>
          <Svg w={8}><path d="M0 2q2-1 3 0v3q-2-1-3 0z" fill="#e2552a" /><path d="M4 2q2 1 3.500 0v3Q6 6 4 5z" fill="#6cab3a" /><path d="M0 5.500q2-1 3 0V8q-2-1-3 0z" fill="#3c76c4" /><path d="M4 5.500q2 1 3.500 0V8Q6 9 4 8z" fill="#f0bd2e" /></Svg>
          Start
        </TaskButton>
        <Spacer $w={2} />
        {taskItems.map(([name, active, stack, art]) => (
          <TaskButton key={name} $active={active} $stack={stack} aria-label={name}><Svg w={19}>{art}</Svg></TaskButton>
        ))}
        <Tray>
          <Svg w={4} h={6}><path d="m0 2.500 2-2 2 2M0 5.500l2-2 2 2" stroke="#222" /></Svg>
          <Svg w={10}><path d="M1 1v8M2 2h4v4H2" stroke="#999" fill="#eee" /><circle cx="7" cy="7" r="2.800" fill="#d33a32" /><path d="m6 6 2 2M8 6 6 8" stroke="#fff" strokeWidth=".8" /></Svg>
          <Svg w={10}><path d="M1 9V7M3.500 9V6M6 9V4M8.500 9V1" stroke="#999" strokeWidth="1.600" /><path d="M1 8 8.500 1" stroke="#eee" strokeWidth=".6" /></Svg>
          <Svg w={10}><path d="M1 3.500h2L5 1.500v7l-2-2H1z" fill="#eee" stroke="#888" strokeWidth=".8" /><path d="M6.500 3q1.500 2 0 4M8 2q2.500 3 0 6" stroke="#999" strokeWidth=".8" /></Svg>
          <Svg w={10}><rect x="1" y="2" width="6" height="7" rx="1" fill="#eee" stroke="#888" /><path d="M5 1v3M8 1v3M4 4h5v2q-2 2-2 4" stroke="#777" fill="#eee" /></Svg>
          <Clock>2:05 AM<br />9/24/2014</Clock>
          <Svg w={9} h={8}><path d="M0 1h9v5H0z" fill="#2f62b4" /><path d="M0 1h9L0 5z" fill="#6d9ddd" /><path d="M2 7h5" stroke="#888" /></Svg>
        </Tray>
      </Taskbar>
    </Shell>
  );
}
